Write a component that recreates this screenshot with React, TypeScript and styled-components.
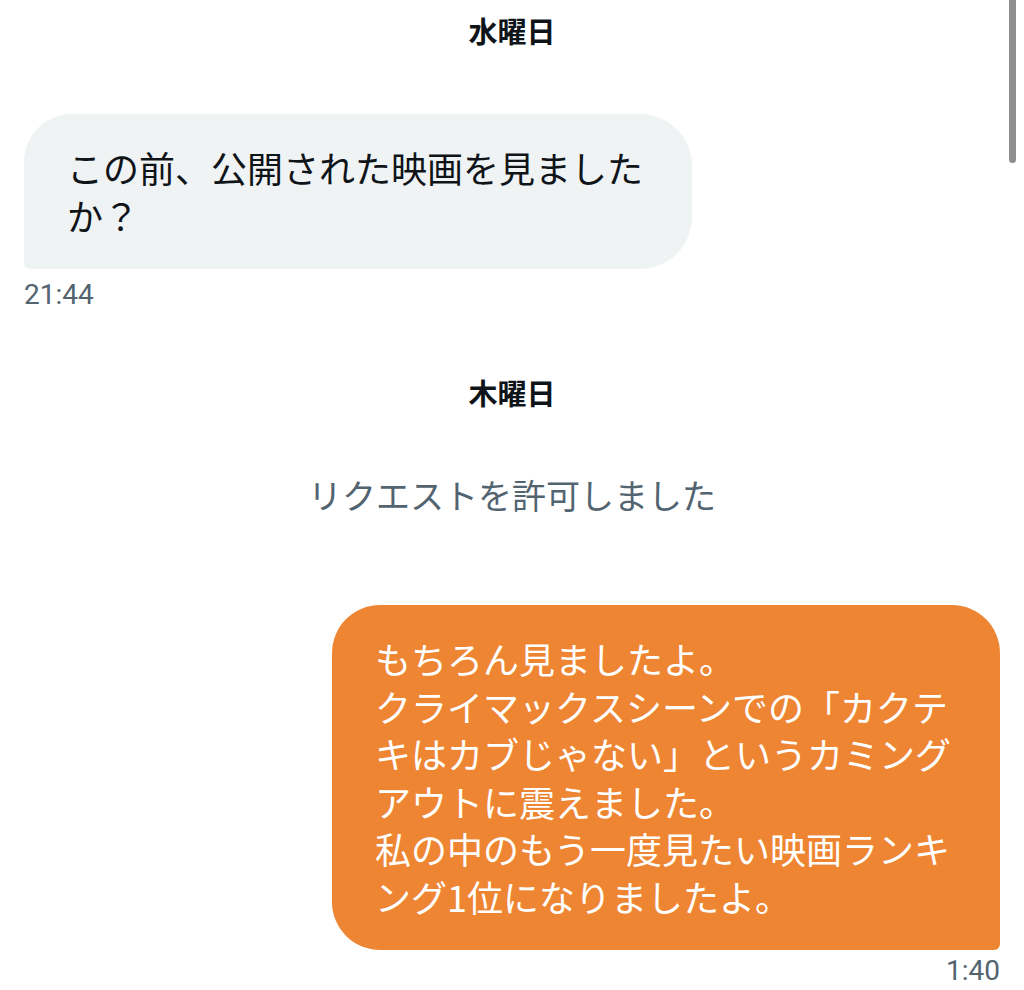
import styled, { createGlobalStyle } from "styled-components";

const GlobalStyle = createGlobalStyle`
  html, body {
    margin: 0;
    padding: 0;
    background: #ffffff;
  }
  body {
    font-family: "Noto Sans CJK JP", "Noto Sans", sans-serif;
    color: #0f1419;
  }
`;

const Screen = styled.div`
  position: relative;
  width: 1024px;
  height: 990px;
  overflow: hidden;
  box-sizing: border-box;
  padding: 10px 24px 0;
  display: flex;
  flex-direction: column;
`;

const DayLabel = styled.div<{ $top: number }>`
  margin-top: ${(p) => p.$top}px;
  text-align: center;
  font-size: 29px;
  line-height: 40px;
  font-weight: 700;
  color: #0f1419;
`;

const SystemNote = styled.div`
  margin-top: 60px;
  text-align: center;
  font-size: 34px;
  line-height: 46px;
  color: #536471;
`;

const Row = styled.div<{ $mine?: boolean; $top: number }>`
  margin-top: ${(p) => p.$top}px;
  display: flex;
  flex-direction: column;
  align-items: ${(p) => (p.$mine ? "flex-end" : "flex-start")};
`;

const Bubble = styled.div<{ $mine?: boolean }>`
  box-sizing: border-box;
  width: 668px;
  padding: 30px 40px 30px 43px;
  font-size: 36px;
  line-height: 47.5px;
  white-space: pre-wrap;
  word-break: break-all;
  background: ${(p) => (p.$mine ? "#ee8533" : "#eff3f4")};
  color: ${(p) => (p.$mine ? "#ffffff" : "#0f1419")};
  border-radius: ${(p) => (p.$mine ? "48px 48px 6px 48px" : "48px 52px 52px 6px")};
`;

const Time = styled.div<{ $top: number }>`
  margin-top: ${(p) => p.$top}px;
  font-family: Roboto, "Liberation Sans", sans-serif;
  font-size: 28px;
  line-height: 34px;
  color: #536471;
`;

const ScrollThumb = styled.div`
  position: absolute;
  top: 0;
  right: 8px;
  width: 7px;
  height: 163px;
  border-radius: 0 0 4px 4px;
  background: #8e8e8e;
`;

export default function App() {
  return (
    <>
      <GlobalStyle />
      <Screen>
        <DayLabel $top={0}>水曜日</DayLabel>
        <Row $top={64}>
          <Bubble>この前、公開された映画を見ましたか？</Bubble>
          <Time $top={9}>21:44</Time>
        </Row>
        <DayLabel $top={60}>木曜日</DayLabel>
        <SystemNote>リクエストを許可しました</SystemNote>
        <Row $mine $top={87}>
          <Bubble $mine>
            {"もちろん見ましたよ。\nクライマックスシーンでの「カクテキはカブじゃない」というカミングアウトに震えました。\n私の中のもう一度見たい映画ランキング1位になりましたよ。"}
          </Bubble>
          <Time $top={4}>1:40</Time>
        </Row>
        <ScrollThumb />
      </Screen>
    </>
  );
}
